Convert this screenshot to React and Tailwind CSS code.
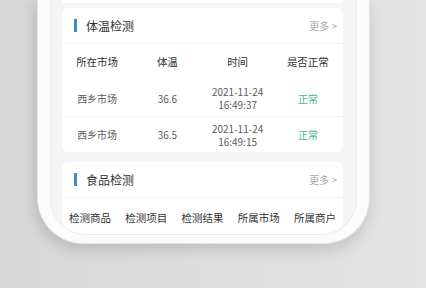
import React from "react";

const font = { fontFamily: '"Noto Sans CJK SC", "Noto Sans", sans-serif' };

const tempRows = [
  { market: "西乡市场", temp: "36.6", date: "2021-11-24", time: "16:49:37", status: "正常" },
  { market: "西乡市场", temp: "36.5", date: "2021-11-24", time: "16:49:15", status: "正常" },
];

const foodCols = ["检测商品", "检测项目", "检测结果", "所属市场", "所属商户"];

const CardHeader = ({ title }) => (
  <div className="flex items-center justify-between h-[36px] pl-[12px] pr-[6px] border-b border-[#f1f1f1]">
    <div className="flex items-center gap-[9px]">
      <span className="w-[3px] h-[13px] bg-[#3b8fc0]" />
      <span className="text-[12px] text-[#333]">{title}</span>
    </div>
    <span className="text-[10px] text-[#aaa]">更多 &gt;</span>
  </div>
);

export default function App() {
  return (
    <div
      className="w-[426px] h-[288px] overflow-hidden bg-gradient-to-r from-[#d7d7d7] via-[#dedede] to-[#e3e3e3]"
      style={font}
    >
      {/* ================= PHONE ================= */}
      <div className="ml-[37px] w-[333px] h-[244px] bg-[#fbfbfb] border-x border-b border-[#e4e4e4] rounded-b-[46px] px-[12px] pb-[8px] shadow-[0_8px_14px_rgba(0,0,0,0.10),-6px_0_12px_rgba(0,0,0,0.06)]">
        <div className="h-full overflow-hidden bg-[#f5f5f5] border-x border-b border-[#ececec] rounded-b-[36px] pl-[11px] pr-[13px] flex flex-col">
          {/* previous card edge */}
          <div className="h-[3px] bg-white rounded-b-[6px]" />

          {/* ================= 体温检测 ================= */}
          <div className="bg-white rounded-[6px] mt-[5px]">
            <CardHeader title="体温检测" />
            <div className="grid grid-cols-4 h-[36px] items-center text-center text-[10.5px] text-[#333]">
              <span>所在市场</span>
              <span>体温</span>
              <span>时间</span>
              <span>是否正常</span>
            </div>
            {tempRows.map((r, i) => (
              <div
                key={i}
                className={`grid grid-cols-4 h-[36px] items-center text-center text-[10px] text-[#5c5c5c] ${i === 0 ? "" : "border-t border-[#f3f3f3]"}`}
              >
                <span>{r.market}</span>
                <span>{r.temp}</span>
                <div className="flex flex-col items-center leading-[13px]">
                  <span>{r.date}</span>
                  <span>{r.time}</span>
                </div>
                <span className="text-[#4cbb8f]">{r.status}</span>
              </div>
            ))}
          </div>

          {/* ================= 食品检测 ================= */}
          <div className="bg-white rounded-[6px] mt-[10px] shrink-0">
            <CardHeader title="食品检测" />
            <div className="grid grid-cols-5 h-[36px] pt-[3px] items-center text-center text-[10.5px] text-[#333]">
              {foodCols.map((c) => (
                <span key={c}>{c}</span>
              ))}
            </div>
          </div>
        </div>
      </div>
    </div>
  );
}
